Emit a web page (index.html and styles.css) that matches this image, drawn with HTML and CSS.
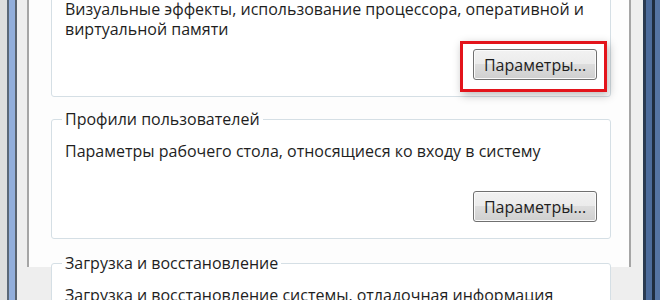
FILE: index.html
```html
<!DOCTYPE html>
<html lang="ru">
  <head>
    <meta charset="UTF-8">
    <title>Параметры системы</title>
    <link rel="stylesheet" href="styles.css">
  </head>
  <body>
    <div class="screen">
      <div class="edge"></div>
      <div class="frame-left"></div>
      <div class="dialog">
        <div class="tab-page">
          <fieldset class="group group-first">
            <legend>Быстродействие</legend>
            <p class="desc">Визуальные эффекты, использование процессора, оперативной и виртуальной памяти</p>
            <div class="actions">
              <span class="marked"><button class="btn">Параметры...</button></span>
            </div>
          </fieldset>
          <fieldset class="group">
            <legend>Профили пользователей</legend>
            <p class="desc">Параметры рабочего стола, относящиеся ко входу в систему</p>
            <div class="actions">
              <button class="btn">Параметры...</button>
            </div>
          </fieldset>
          <fieldset class="group">
            <legend>Загрузка и восстановление</legend>
            <p class="desc">Загрузка и восстановление системы, отладочная информация</p>
            <div class="actions">
              <button class="btn">Параметры...</button>
            </div>
          </fieldset>
        </div>
      </div>
      <div class="frame-right"></div>
    </div>
  </body>
</html>
```

FILE: styles.css
```css
body {
    margin: 0;
    height: 300px;
    overflow: hidden;
    font-family: "Open Sans", "Noto Sans", sans-serif;
    font-size: 16px;
    color: #1e1e1e;
}
.screen {
    display: flex;
    height: 300px;
    width: 660px;
}
.edge {
    width: 7px;
    background: #dedede;
}
.frame-left {
    width: 6px;
    background: #92aedb;
    border-left: 2px solid #5c6878;
    border-right: 2px solid #59626e;
}
.frame-right {
    width: 17px;
    background: linear-gradient(to right, #2b3b52 0 3px, #4d6c9c 3px 9px, #1f2d40 9px 12px, #5574a4 12px);
}
.dialog {
    flex: 1;
    background: #eeeeee;
    padding: 0 12px 0 10px;
}
.tab-page {
    height: 100%;
    background: #fdfdfd;
    border-left: 2px solid #a5a5a5;
    border-right: 2px solid #a5a5a5;
    padding: 0 18px 0 22px;
}

/* group boxes */
.group {
    margin: 0 0 14px 0;
    padding: 12px 13px 16px 13px;
    border: 1px solid #d5dfe5;
    border-radius: 3px;
    background: #ffffff;
    min-inline-size: 0;
}
.group-first {
    margin-top: -33px;
    margin-bottom: 12px;
}
.group legend {
    padding: 0 3px;
    margin-left: -3px;
    line-height: 20px;
}
.desc {
    margin: 0 -8px 10px 0;
    line-height: 20px;
    min-height: 40px;
}
.actions {
    display: flex;
    justify-content: flex-end;
}
.btn {
    width: 124px;
    height: 31px;
    font: inherit;
    color: #1e1e1e;
    border: 1px solid #707070;
    border-radius: 3px;
    background: linear-gradient(#f2f2f2 0%, #ebebeb 50%, #dddddd 50%, #cfcfcf 100%);
    box-shadow: inset 0 0 0 1px #fbfbfb;
    padding: 0;
}
.marked {
    position: relative;
    display: inline-flex;
}
.marked::after {
    content: '';
    position: absolute;
    top: -8px;
    right: -10px;
    bottom: -12px;
    left: -13px;
    border: 3px solid #e3141b;
    box-shadow: 2px 3px 9px rgba(0, 0, 0, 0.28);
    pointer-events: none;
}
```
